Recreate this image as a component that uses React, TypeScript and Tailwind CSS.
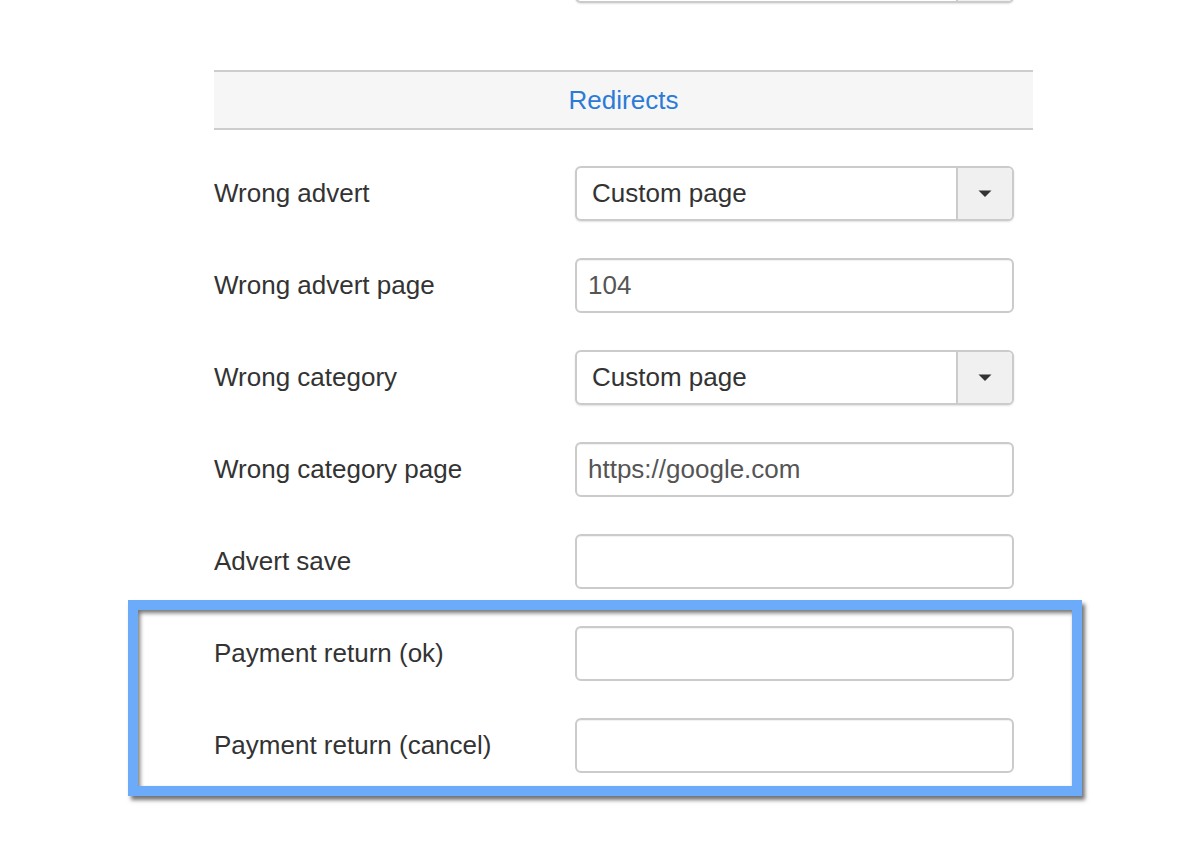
import React from "react";

function Caret() {
  return (
    <svg width="16" height="9" viewBox="0 0 16 9" className="block">
      <path d="M1.5 1.5 L14.5 1.5 L8 8 Z" fill="#333" />
    </svg>
  );
}

function SelectBox({ value, className = "" }: { value: string; className?: string }) {
  return (
    <div
      className={
        "flex h-[55px] w-[439px] items-stretch rounded-[6px] border-2 border-[#cbcbcb] bg-white shadow-[0_1px_2px_rgba(0,0,0,0.12)] " +
        className
      }
    >
      <div className="flex flex-1 items-center pl-[15px] text-[26px] text-[#333]">{value}</div>
      <div className="flex w-[56px] items-center justify-center rounded-r-[4px] border-l-2 border-[#cbcbcb] bg-[#f0f0f0]">
        <Caret />
      </div>
    </div>
  );
}

function TextBox({ value }: { value: string }) {
  return (
    <div className="flex h-[55px] w-[439px] items-center rounded-[6px] border-2 border-[#cbcbcb] bg-white pl-[11px] text-[26px] text-[#555] shadow-[inset_0_1px_1px_rgba(0,0,0,0.06)]">
      {value}
    </div>
  );
}

function Row({ label, children }: { label: string; children: React.ReactNode }) {
  return (
    <div className="flex items-center">
      <div className="w-[361px] text-[26px] text-[#333]">{label}</div>
      {children}
    </div>
  );
}

export default function App() {
  return (
    <div
      className="relative h-[854px] w-[1190px] overflow-hidden bg-white"
      style={{ fontFamily: '"Liberation Sans", Arial, sans-serif' }}
    >
      <div className="ml-[214px] w-[819px]">
        <div className="ml-[361px] mt-[-52px]">
          <SelectBox value="" />
        </div>
        <div className="mt-[67px] flex h-[60px] items-center justify-center border-y-2 border-[#cccccc] bg-[#f6f6f6] text-[26px] text-[#2b7bd6]">
          Redirects
        </div>
        <div className="mt-[36px] flex flex-col gap-[37px]">
          <Row label="Wrong advert">
            <SelectBox value="Custom page" />
          </Row>
          <Row label="Wrong advert page">
            <TextBox value="104" />
          </Row>
          <Row label="Wrong category">
            <SelectBox value="Custom page" />
          </Row>
          <Row label="Wrong category page">
            <TextBox value="https://google.com" />
          </Row>
          <Row label="Advert save">
            <TextBox value="" />
          </Row>
          <Row label="Payment return (ok)">
            <TextBox value="" />
          </Row>
          <Row label="Payment return (cancel)">
            <TextBox value="" />
          </Row>
        </div>
      </div>
      <div className="pointer-events-none absolute left-[128px] top-[600px] h-[196px] w-[954px] border-[10px] border-[#6cabfa] shadow-[3px_4px_4px_rgba(0,0,0,0.55),inset_2px_3px_4px_rgba(0,0,0,0.55)]" />
    </div>
  );
}
